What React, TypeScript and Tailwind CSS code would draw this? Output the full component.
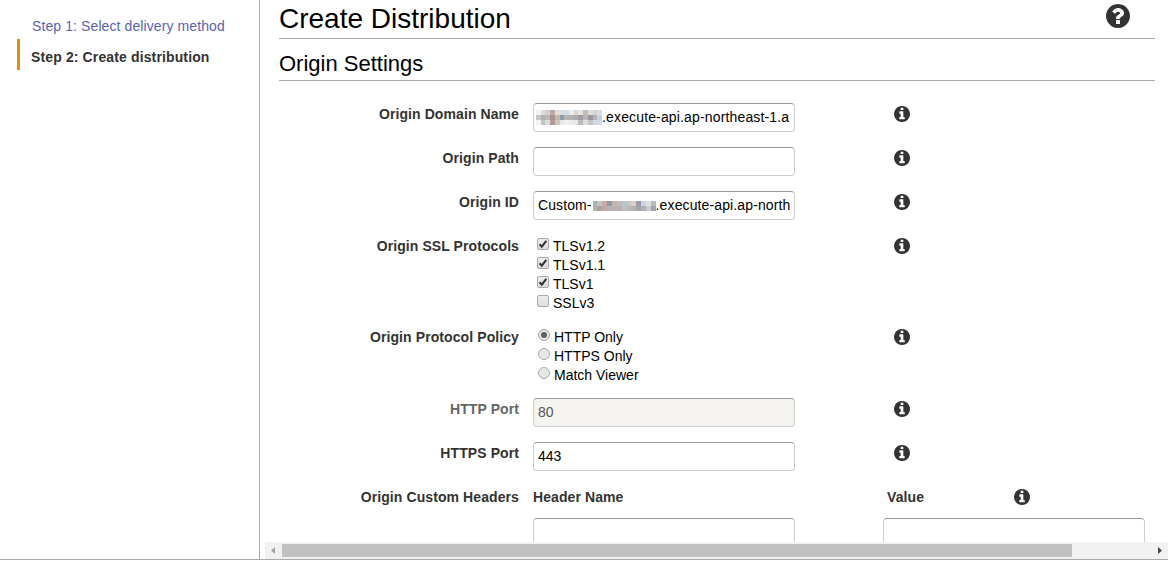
import React from "react";

const field =
  "flex h-[29px] w-[262px] shrink-0 items-center overflow-hidden whitespace-nowrap rounded-[4px] border border-[#ccc] border-t-[#999] px-1 text-[14px] leading-[27px]";

const labelText = "text-[14px] leading-4 font-bold tracking-[0.09px]";

const disc =
  "M1664 896q0 209-103 385.500t-279.500 279.500-385.500 103-385.500-103-279.500-279.500-103-385.500 103-385.500 279.500-279.500 385.500-103 385.500 103 279.500 279.500 103 385.500z";

function Info() {
  return (
    <svg viewBox="128 128 1536 1536" className="size-4 fill-[#333]" fillRule="evenodd">
      <path
        d={
          "M1152 1376v-160q0-14-9-23t-23-9h-96v-512q0-14-9-23t-23-9h-320q-14 0-23 9t-9 23v160q0 14 9 23t23 9h96v320h-96q-14 0-23 9t-9 23v160q0 14 9 23t23 9h448q14 0 23-9t9-23zM1024 480v-160q0-14-9-23t-23-9h-192q-14 0-23 9t-9 23v160q0 14 9 23t23 9h192q14 0 23-9t9-23z" +
          disc
        }
      />
    </svg>
  );
}

function Help() {
  return (
    <svg viewBox="128 128 1536 1536" className="mt-[4px] mr-[25px] size-6 fill-[#333]" fillRule="evenodd">
      <path
        d={
          "M1024 1376v-192q0-14-9-23t-23-9h-192q-14 0-23 9t-9 23v192q0 14 9 23t23 9h192q14 0 23-9t9-23zM1280 704q0-88-55.500-163t-138.500-116-170-41q-243 0-371 213-15 24 8 42l132 100q7 6 19 6 16 0 25-12 53-68 86-92 34-24 86-24 48 0 85.500 26t37.500 59q0 38-20 61t-68 45q-63 28-115.500 86.500t-52.500 125.500v36q0 14 9 23t23 9h192q14 0 23-9t9-23q0-19 21.500-49.500t54.500-49.500q32-18 49-28.500t46-35 44.500-48 28-60.500 12.500-81z" +
          disc
        }
      />
    </svg>
  );
}

function Row({ label, muted, children }: { label: string; muted?: boolean; children: React.ReactNode }) {
  return (
    <div className="flex items-start">
      <div className={`w-[254px] shrink-0 pt-[3px] text-right ${labelText} ${muted ? "text-[#666]" : "text-[#333]"}`}>
        {label}
      </div>
      <div className="ml-[14px] w-[361px] shrink-0">{children}</div>
      <div className="pt-[3px]">
        <Info />
      </div>
    </div>
  );
}

const domainMask = [
  ["#f2f2f2", "#dadcdc", "#d3cfd0", "#bda8a6", "#e4deda", "#dcdde0", "#cfe0ea", "#ececec", "#dadada", "#e8e4e0", "#c8bcb6", "#dedede", "#d2d4d4", "#d6dfe6"],
  ["#c6c6c6", "#a9b4b8", "#c8b4ae", "#a49494", "#c2b6b2", "#8f9fa8", "#b6b6b6", "#b2b2b2", "#acacac", "#9e9c9c", "#b8b8b8", "#979797", "#b4b4b6", "#c6d0de"],
  ["#f4f4f4", "#b9c5c9", "#e2dcda", "#b09c98", "#cfc6c2", "#e8e8e8", "#f0f0f0", "#eaeaea", "#e8e8e8", "#b8bcbc", "#e0dcd8", "#c4c4c4", "#cdd8e2", "#d0daea"],
];

const idMask = [
  ["#a9b1b3", "#c4c4c4", "#c9aaa8", "#8f9da1", "#c2b4a8", "#c4b8b8", "#b9c6ca", "#c6c6c6", "#dccfc2", "#9f97ab", "#c9d4e6", "#dedede", "#b4bcbe"],
  ["#b3b5b5", "#a8a4a4", "#c4a6a4", "#b8b2b2", "#b4b4b4", "#bcb0b0", "#c4bebe", "#bababa", "#b6b2b2", "#a6a2ae", "#b0b0b4", "#c8ccd0", "#9aa6ac"],
];

function Mosaic({ rows }: { rows: string[][] }) {
  return (
    <span className="flex flex-1 flex-col">
      {rows.map((r, i) => (
        <span key={i} className="flex h-[5px]">
          {r.map((c, j) => (
            <span key={j} className="flex-1" style={{ background: c }} />
          ))}
        </span>
      ))}
    </span>
  );
}

function Check({ label, on }: { label: string; on?: boolean }) {
  return (
    <div className="flex h-[19px] items-start gap-1 pl-1 text-[14px] leading-[19px]">
      <svg viewBox="0 0 12 12" className="size-3 translate-y-px">
        <defs>
          <linearGradient id="box" x1="0" y1="0" x2="0" y2="1">
            <stop offset="0" stopColor="#eee" />
            <stop offset="1" stopColor="#dcdcdc" />
          </linearGradient>
        </defs>
        <rect x=".5" y=".5" width="11" height="11" rx="1.5" fill="url(#box)" stroke="#aaa" />
        {on && <path d="M2.6 6.200 4.800 8.600 9.300 2.800" fill="none" stroke="#333" strokeWidth="2.100" />}
      </svg>
      <span>{label}</span>
    </div>
  );
}

function Radio({ label, on }: { label: string; on?: boolean }) {
  return (
    <div className="flex h-[19px] items-start gap-1 pl-[5px] text-[14px] leading-[19px]">
      <svg viewBox="0 0 12 12" className="size-3 translate-y-px">
        <circle cx="6" cy="6" r="5.500" fill="#e6e6e6" stroke="#aaa" />
        {on && <circle cx="6" cy="6" r="3" fill="#606060" />}
      </svg>
      <span>{label}</span>
    </div>
  );
}

export default function App() {
  return (
    <div className="h-[563px] w-[1168px] overflow-hidden bg-white font-['Liberation_Sans',Arial,sans-serif] text-black">
      <div className="flex h-[560px] border-b border-[#aaa]">
        <aside className="w-[260px] shrink-0 border-r border-[#aaa] pt-[11px] pl-[17px]">
          <div className="flex h-[28px] items-center pl-[15px] text-[14px] tracking-[0.1px] text-[#5a64b4]">
            <span className="pt-[2px]">Step 1: Select delivery method</span>
          </div>
          <div className="flex h-[31px] items-center border-l-[3px] border-[#e09010] pl-[11px] text-[14px] font-bold tracking-[0.13px] text-[#333]">
            <span className="pt-[6px]">Step 2: Create distribution</span>
          </div>
        </aside>
        <main className="flex min-w-0 flex-1 flex-col pl-[5px]">
          <div className="min-h-0 flex-1 overflow-hidden pl-[14px]">
            <div className="flex h-[39px] w-[876px] items-start justify-between border-b border-[#aaa]">
              <h1 className="pt-[3px] text-[28px] leading-8">Create Distribution</h1>
              <Help />
            </div>
            <h2 className="h-[42px] w-[876px] border-b border-[#aaa] pt-[12px] text-[22px] leading-[26px]">
              Origin Settings
            </h2>
            <div className="-ml-[14px] flex w-[903px] flex-col pt-[22px]">
              <div className="h-11">
                <Row label="Origin Domain Name">
                  <div className={field}>
                    <span className="-ml-[2px] flex w-[66px] shrink-0">
                      <Mosaic rows={domainMask} />
                    </span>
                    <span className="tracking-[0.15px]">.execute-api.ap-northeast-1.a</span>
                  </div>
                </Row>
              </div>
              <div className="h-11">
                <Row label="Origin Path">
                  <div className={field} />
                </Row>
              </div>
              <div className="h-11">
                <Row label="Origin ID">
                  <div className={field}>
                    <span className="tracking-[0.1px]">Custom-</span>
                    <span className="ml-px flex w-[63px] shrink-0">
                      <Mosaic rows={idMask} />
                    </span>
                    <span className="tracking-[0.12px]">.execute-api.ap-north</span>
                  </div>
                </Row>
              </div>
              <div className="h-[91px]">
                <Row label="Origin SSL Protocols">
                  <div className="pt-[2px]">
                    <Check label="TLSv1.2" on />
                    <Check label="TLSv1.1" on />
                    <Check label="TLSv1" on />
                    <Check label="SSLv3" />
                  </div>
                </Row>
              </div>
              <div className="h-[72px]">
                <Row label="Origin Protocol Policy">
                  <div className="pt-[2px]">
                    <Radio label="HTTP Only" on />
                    <Radio label="HTTPS Only" />
                    <Radio label="Match Viewer" />
                  </div>
                </Row>
              </div>
              <div className="h-11">
                <Row label="HTTP Port" muted>
                  <div className={`${field} bg-[#f5f3ef] text-[#555]`}>80</div>
                </Row>
              </div>
              <div className="h-11">
                <Row label="HTTPS Port">
                  <div className={field}>443</div>
                </Row>
              </div>
              <div className="flex items-start text-[#333]">
                <div className={`w-[254px] shrink-0 pt-[3px] text-right ${labelText}`}>Origin Custom Headers</div>
                <div className="ml-[14px] w-[350px] shrink-0">
                  <div className={`h-8 pt-[3px] ${labelText}`}>Header Name</div>
                  <div className={field} />
                </div>
                <div>
                  <div className={`flex h-8 pt-[3px] pl-1 ${labelText}`}>
                    <span className="w-[127px]">Value</span>
                    <Info />
                  </div>
                  <div className={field} />
                </div>
              </div>
            </div>
          </div>
          <div className="flex h-[17px] shrink-0 items-center bg-[#f1f1f1]">
            <svg viewBox="0 0 17 17" className="w-[17px] shrink-0">
              <path d="M10 5v7L6 8.500z" fill="#a3a3a3" />
            </svg>
            <div className="h-[13px] w-[790px] bg-[#c1c1c1]" />
            <div className="flex-1" />
            <svg viewBox="0 0 17 17" className="w-[17px] shrink-0">
              <path d="M7 5v7l4-3.500z" fill="#444" />
            </svg>
          </div>
        </main>
      </div>
    </div>
  );
}
